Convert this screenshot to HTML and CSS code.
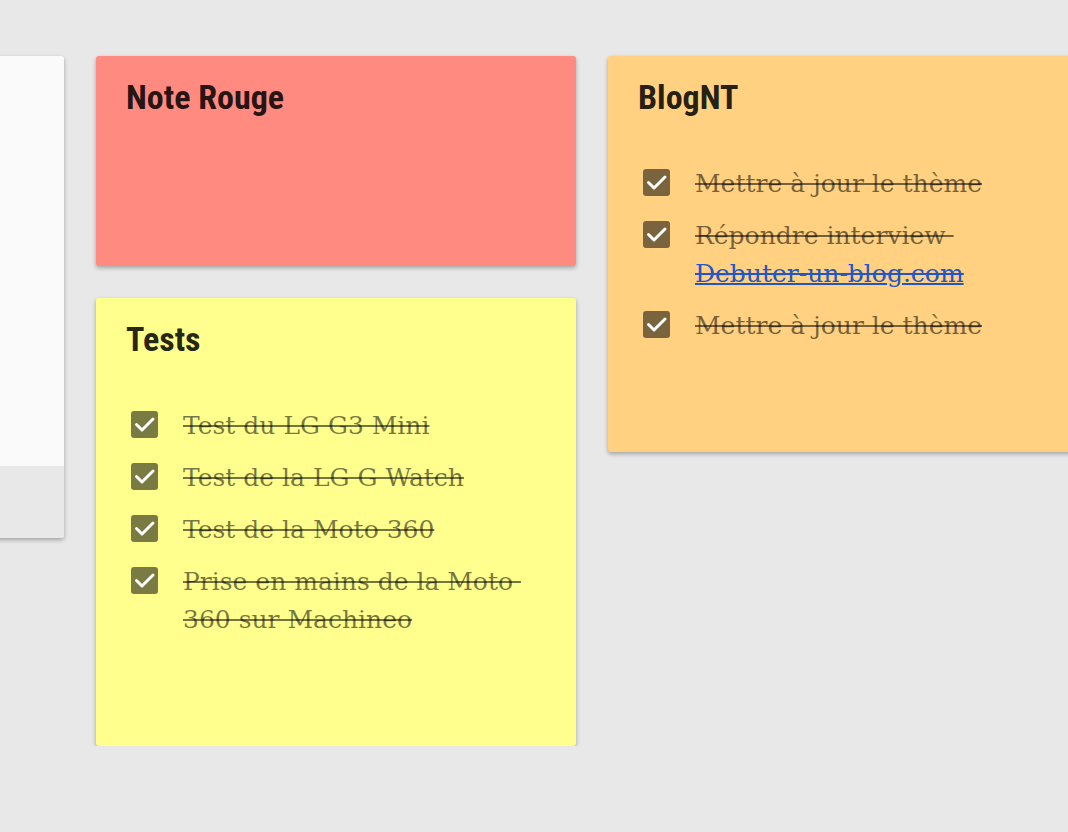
FILE: index.html
```html
<!DOCTYPE html>
<html lang="fr">
<head>
  <meta charset="UTF-8" />
  <title>Notes</title>
  <link rel="stylesheet" href="styles.css">
</head>
<body>
  <main class="board">
    <div class="column">
      <div class="card card-white">
        <div class="card-body"></div>
        <div class="card-footer"></div>
      </div>
    </div>

    <div class="column">
      <div class="card card-red">
        <h2>Note Rouge</h2>
      </div>
      <div class="card card-yellow">
        <h2>Tests</h2>
        <ul class="checklist">
          <li><span class="box"><svg viewBox="0 0 27 27"><rect width="27" height="27" rx="3"/><path d="M5.5 13.5l5.5 5.5 11-11"/></svg></span><span class="label">Test du LG G3 Mini</span></li>
          <li><span class="box"><svg viewBox="0 0 27 27"><rect width="27" height="27" rx="3"/><path d="M5.5 13.5l5.5 5.5 11-11"/></svg></span><span class="label">Test de la LG G Watch</span></li>
          <li><span class="box"><svg viewBox="0 0 27 27"><rect width="27" height="27" rx="3"/><path d="M5.5 13.5l5.5 5.5 11-11"/></svg></span><span class="label">Test de la Moto 360</span></li>
          <li><span class="box"><svg viewBox="0 0 27 27"><rect width="27" height="27" rx="3"/><path d="M5.5 13.5l5.5 5.5 11-11"/></svg></span><span class="label">Prise en mains de la Moto&nbsp;<wbr>360 sur Machineo</span></li>
        </ul>
      </div>
    </div>

    <div class="column">
      <div class="card card-orange">
        <h2>BlogNT</h2>
        <ul class="checklist">
          <li><span class="box"><svg viewBox="0 0 27 27"><rect width="27" height="27" rx="3"/><path d="M5.5 13.5l5.5 5.5 11-11"/></svg></span><span class="label">Mettre à jour le thème</span></li>
          <li><span class="box"><svg viewBox="0 0 27 27"><rect width="27" height="27" rx="3"/><path d="M5.5 13.5l5.5 5.5 11-11"/></svg></span><span class="label">Répondre interview&nbsp;<wbr><a href="#">Debuter-un-blog.com</a></span></li>
          <li><span class="box"><svg viewBox="0 0 27 27"><rect width="27" height="27" rx="3"/><path d="M5.5 13.5l5.5 5.5 11-11"/></svg></span><span class="label">Mettre à jour le thème</span></li>
        </ul>
      </div>
    </div>
  </main>
</body>
</html>
```

FILE: styles.css
```css
* {
  box-sizing: border-box;
}
body {
  margin: 0;
  background: #e8e8e8;
  overflow: hidden;
}
.board {
  display: flex;
  align-items: flex-start;
  gap: 32px;
  padding-top: 56px;
  margin-left: -416px;
}
.column {
  width: 480px;
  flex-shrink: 0;
  display: flex;
  flex-direction: column;
  gap: 32px;
}
.card {
  border-radius: 3px;
  box-shadow: 0 2px 4px rgba(0,0,0,0.3);
  padding: 22px 30px 107px 30px;
  min-height: 210px;
}
.card h2 {
  margin: 0;
  font-family: "Roboto Condensed", "Liberation Sans Narrow", "DejaVu Sans Condensed", Roboto, sans-serif;
  font-weight: 700;
  font-size: 34px;
  line-height: 38px;
  color: rgba(0,0,0,0.87);
}
.card-white {
  padding: 0;
  overflow: hidden;
  background: #fafafa;
}
.card-white .card-body {
  height: 410px;
}
.card-white .card-footer {
  height: 72px;
  background: #e8e8e8;
}
.card-red {
  background: #ff8a80;
}
.card-yellow {
  background: #ffff8d;
}
.card-orange {
  background: #ffd180;
}
.checklist {
  list-style: none;
  margin: 49px 0 0 0;
  padding: 0;
  display: flex;
  flex-direction: column;
  gap: 14px;
}
.checklist li {
  display: flex;
  align-items: flex-start;
  gap: 25px;
  padding-left: 5px;
}
.box {
  flex-shrink: 0;
  width: 27px;
  height: 27px;
  margin-top: 4px;
}
.box svg {
  display: block;
  width: 27px;
  height: 27px;
}
.box rect {
  fill: rgba(0,0,0,0.52);
}
.box path {
  fill: none;
  stroke: #fff;
  stroke-width: 3;
  stroke-linecap: round;
  stroke-linejoin: round;
}
.label {
  font-family: "Roboto Slab", "DejaVu Serif", serif;
  font-size: 25px;
  line-height: 38px;
  color: rgba(0,0,0,0.54);
  text-decoration: line-through;
  text-decoration-thickness: 1.5px;
}
.label a {
  color: #2356c6;
  white-space: nowrap;
  text-decoration: underline line-through;
  text-decoration-thickness: 1.5px;
}
```
